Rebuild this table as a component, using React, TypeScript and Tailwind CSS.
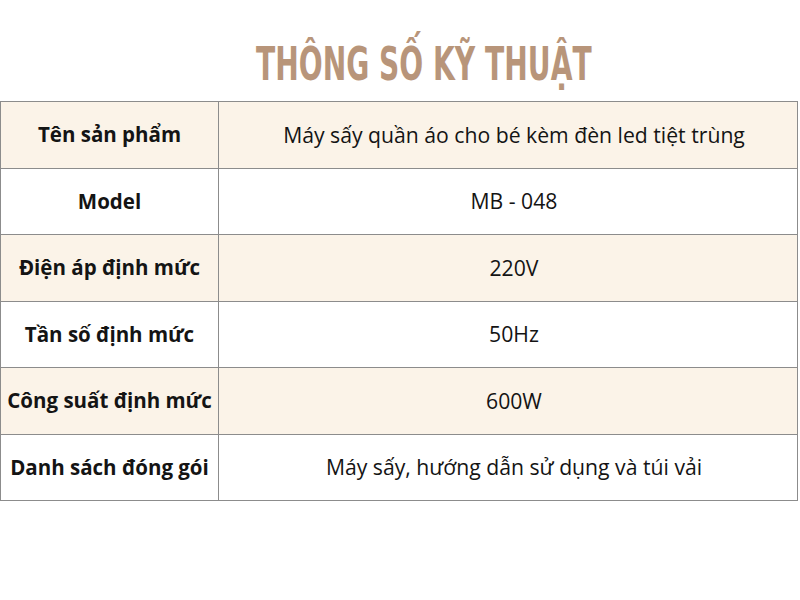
const rows = [
  { label: 'Tên sản phẩm', value: 'Máy sấy quần áo cho bé kèm đèn led tiệt trùng', shade: true },
  { label: 'Model', value: 'MB - 048', shade: false },
  { label: 'Điện áp định mức', value: '220V', shade: true },
  { label: 'Tần số định mức', value: '50Hz', shade: false },
  { label: 'Công suất định mức', value: '600W', shade: true },
  { label: 'Danh sách đóng gói', value: 'Máy sấy, hướng dẫn sử dụng và túi vải', shade: false },
];

export default function App() {
  return (
    <div className="w-[800px] h-[600px] bg-white overflow-hidden font-['Open_Sans',sans-serif] text-[#141414]">
      {/* Title */}
      <div className="h-[101px] flex items-center justify-center pl-12 pt-[26px]">
        <h1 className="font-['Liberation_Sans_Narrow','DejaVu_Sans_Condensed',sans-serif] font-bold text-[46px] leading-none text-[#b8957a] scale-x-[0.68] whitespace-nowrap">
          THÔNG SỐ KỸ THUẬT
        </h1>
      </div>

      {/* Spec table */}
      <div className="w-[798px] border-t-[1.5px] border-l-[1.5px] border-[#8c8c8c]">
        {rows.map((row) => (
          <div
            key={row.label}
            className={`flex h-[66.5px] border-b-[1.5px] border-[#8c8c8c] ${row.shade ? 'bg-[#fbf3e8]' : 'bg-white'}`}
          >
            <div className="w-[218px] shrink-0 flex items-center justify-center border-r-[1.5px] border-[#8c8c8c] text-[20.5px] font-bold whitespace-nowrap">
              {row.label}
            </div>
            <div className="flex-1 flex items-center justify-center pl-3 border-r-[1.5px] border-[#8c8c8c] text-[21.2px] whitespace-nowrap">
              {row.value}
            </div>
          </div>
        ))}
      </div>
    </div>
  );
}
